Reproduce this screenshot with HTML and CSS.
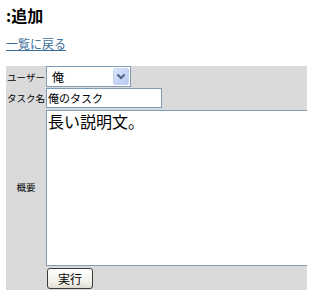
FILE: index.html
```html
<!DOCTYPE html>
<html lang="ja">
<head>
<meta charset="utf-8">
<title>追加</title>
<link rel="stylesheet" href="styles.css">
</head>
<body>
<div class="page">
  <h1 class="title">:追加</h1>
  <a class="back" href="#">一覧に戻る</a>
  <form class="form">
    <div class="label">ユーザー</div>
    <div class="field f-user">
      <span class="select-wrap">
        <select class="select"><option>俺</option></select>
        <svg class="arrow" width="16" height="17" viewBox="0 0 16 17">
          <defs>
            <linearGradient id="g" x1="0" y1="0" x2="1" y2="1">
              <stop offset="0" stop-color="#dce6fb"/>
              <stop offset="1" stop-color="#b5c8f2"/>
            </linearGradient>
          </defs>
          <rect x="0.5" y="0.5" width="15" height="16" rx="1.5" fill="url(#g)" stroke="#c6d4f4"/>
          <path d="M4.5 6.5 L8 10 L11.5 6.5" fill="none" stroke="#4d6185" stroke-width="2"/>
        </svg>
      </span>
    </div>
    <div class="label">タスク名</div>
    <div class="field f-name"><input class="text" type="text" value="俺のタスク"></div>
    <div class="label">概要</div>
    <div class="field f-desc"><textarea class="area">長い説明文。</textarea></div>
    <div class="label"></div>
    <div class="field f-btn"><button class="btn" type="button">実行</button></div>
  </form>
</div>
</body>
</html>
```
FILE: styles.css
```css
html, body {
  margin: 0;
  padding: 0;
  overflow: hidden;
  background: #ffffff;
}
body {
  font-family: "Noto Sans CJK JP", "Noto Sans", sans-serif;
  color: #000;
}
.page {
  padding: 5px 0 0 6px;
}
.title {
  margin: 0;
  font-size: 16px;
  line-height: 20px;
  font-weight: bold;
}
.back {
  display: block;
  width: max-content;
  margin-top: 11px;
  font-size: 12px;
  line-height: 16px;
  color: #3d6d9b;
  text-decoration: underline;
}
.form {
  margin-top: 14px;
  width: 301px;
  display: grid;
  grid-template-columns: 40px 1fr;
  background: #dadada;
}
.label {
  font-size: 9.5px;
  line-height: 12px;
  text-align: center;
  align-self: center;
  white-space: nowrap;
}
.field {
  display: flex;
  align-items: flex-start;
}
.f-name { padding-top: 1px; }
.f-desc { padding-top: 2px; }
.f-btn { padding: 2px 0 1px 1px; }
.select-wrap {
  position: relative;
  display: block;
  line-height: 0;
}
.select {
  -webkit-appearance: none;
  appearance: none;
  box-sizing: border-box;
  width: 85px;
  height: 21px;
  margin: 0;
  padding: 0 0 0 5px;
  border: 1px solid #7f9db9;
  background: #fff;
  font-family: inherit;
  font-size: 12px;
  color: #000;
  border-radius: 0;
}
.arrow {
  position: absolute;
  right: 2px;
  top: 2px;
}
.text {
  box-sizing: border-box;
  width: 116px;
  height: 20px;
  margin: 0;
  padding: 0 0 0 1px;
  border: 1px solid #7f9db9;
  background: #fff;
  font-family: inherit;
  font-size: 11px;
  color: #000;
  outline: none;
}
.area {
  box-sizing: border-box;
  width: 261px;
  height: 156px;
  margin: 0;
  padding: 0 1px;
  border: 1px solid #7f9db9;
  border-right: none;
  background: #fff;
  font-family: inherit;
  font-size: 16px;
  line-height: 20px;
  color: #000;
  resize: none;
  overflow: hidden;
}
.btn {
  box-sizing: border-box;
  width: 46px;
  height: 21px;
  margin: 0;
  padding: 0;
  border: 1px solid #3c3c3c;
  border-radius: 3px;
  background: linear-gradient(#ffffff, #f0efe8 70%, #dedbd0);
  font-family: inherit;
  font-size: 12px;
  line-height: 18px;
  color: #000;
}
```
